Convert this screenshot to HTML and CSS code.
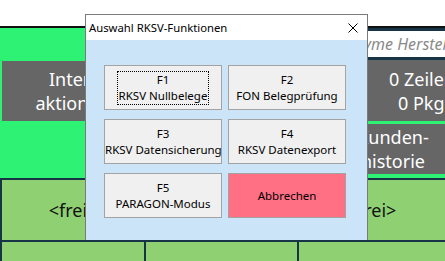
FILE: index.html
```html
<!DOCTYPE html>
<html lang="de">
<head>
  <meta charset="UTF-8">
  <meta name="viewport" content="width=device-width, initial-scale=1.0">
  <title>Auswahl RKSV-Funktionen</title>
  <link rel="stylesheet" href="styles.css">
</head>
<body>
  <div class="topbar"></div>

  <div class="upper">
    <div class="col col-left">
      <div class="tile tile-left">Inter-<br>aktionen</div>
    </div>
    <div class="col col-mid"></div>
    <div class="col col-right">
      <div class="search">Anonyme Hersteller</div>
      <div class="tile tile-count"><span>0 Zeilen</span><span class="pkg">0 Pkg</span></div>
      <div class="tile tile-history">Kunden-<br>historie</div>
    </div>
  </div>

  <div class="lower">
    <div class="cell">&lt;frei&gt;</div>
    <div class="cell">&lt;frei&gt;</div>
    <div class="cell">&lt;frei&gt;</div>
    <div class="cell"></div>
    <div class="cell"></div>
    <div class="cell"></div>
  </div>

  <div class="dialog">
    <div class="dialog-title">
      <span>Auswahl RKSV-Funktionen</span>
      <svg class="close" width="10" height="10" viewBox="0 0 10 10">
        <path d="M0.5 0.5 L9.5 9.5 M9.5 0.5 L0.5 9.5" stroke="#000" stroke-width="1" fill="none"/>
      </svg>
    </div>
    <div class="dialog-body">
      <button class="btn"><span class="focus">F1<br>RKSV Nullbelege</span></button>
      <button class="btn">F2<br>FON Belegprüfung</button>
      <button class="btn">F3<br>RKSV Datensicherung</button>
      <button class="btn">F4<br>RKSV Datenexport</button>
      <button class="btn">F5<br>PARAGON-Modus</button>
      <button class="btn btn-cancel">Abbrechen</button>
    </div>
  </div>
</body>
</html>
```

FILE: styles.css
```css
body {
  margin: 0;
  width: 445px;
  height: 261px;
  overflow: hidden;
  position: relative;
  background: #ffffff;
  font-family: "Noto Sans", "Open Sans", sans-serif;
}

.topbar {
  height: 26px;
  background: #ffffff;
  border-bottom: 2px solid #111111;
}

.upper {
  display: grid;
  grid-template-columns: 144px 153px minmax(0, 1fr);
  height: 150px;
  background: #2ef273;
}

.col {
  min-width: 0;
  overflow: hidden;
}

.col-left {
  padding: 33px 1px 0 2px;
}

.tile {
  background: #666666;
  color: #ffffff;
  font-size: 18px;
  line-height: 24px;
  text-align: center;
  display: flex;
  flex-direction: column;
  align-items: center;
  justify-content: center;
}

.tile-left {
  height: 60px;
}

.col-right {
  padding-left: 2px;
}

.search {
  height: 26px;
  border-top: 3px solid #163446;
  border-bottom: 3px solid #163446;
  background: #ffffff;
  color: #8a8a8a;
  font-style: italic;
  font-size: 16px;
  line-height: 26px;
  padding-left: 28px;
  white-space: nowrap;
}

.tile-count {
  height: 61px;
  align-items: flex-start;
  padding-left: 90px;
  white-space: nowrap;
}

.pkg {
  margin-left: 9px;
}

.tile-history {
  height: 50px;
  margin-top: 3px;
  padding-left: 42px;
}

.lower {
  display: grid;
  grid-template-columns: 142px 151px minmax(0, 1fr);
  grid-template-rows: 60px 19px;
  gap: 2px;
  padding: 2px 0 0 2px;
  background: #163446;
}

.cell {
  background: #8fd072;
  color: #111111;
  font-size: 18px;
  display: flex;
  align-items: center;
  justify-content: center;
}

.dialog {
  position: absolute;
  left: 85px;
  top: 14px;
  width: 283px;
  height: 226px;
  box-sizing: border-box;
  border: 1px solid #7a7a7a;
  border-bottom: none;
  background: #cce4f7;
  display: flex;
  flex-direction: column;
}

.dialog-title {
  height: 25px;
  background: #ffffff;
  display: flex;
  align-items: center;
  justify-content: space-between;
  padding: 0 9px 0 3px;
  font-size: 11.3px;
  color: #000000;
}

.dialog-body {
  display: grid;
  grid-template-columns: 118px 118px;
  grid-auto-rows: 45px;
  gap: 9px 6px;
  padding: 25px 0 0 18px;
}

.btn {
  margin: 0;
  padding: 0;
  border: 1px solid #a3a3a3;
  background: #f0f0f0;
  font-family: inherit;
  font-size: 11.5px;
  line-height: 16px;
  color: #000000;
  text-align: center;
  white-space: nowrap;
}

.btn-cancel {
  background: #ff7084;
}

.focus {
  display: inline-block;
  outline: 1px dotted #000000;
  padding: 0 1px;
}
```
